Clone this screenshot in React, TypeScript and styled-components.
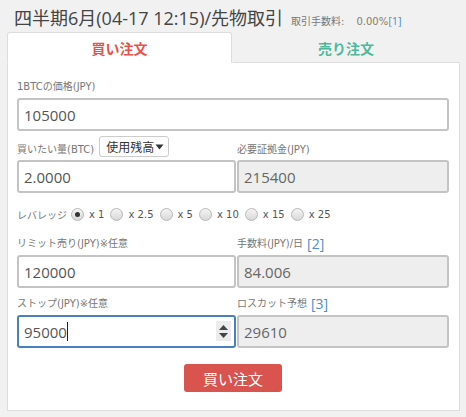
import { ReactElement } from 'react'
import styled, { createGlobalStyle } from 'styled-components'

const GlobalStyle = createGlobalStyle`
  html, body {
    margin: 0;
    padding: 0;
    background: #f1f1f1;
    font-family: 'Open Sans', 'Noto Sans CJK JP', sans-serif;
    color: #555;
  }
`

const smallFont = `'DejaVu Sans', 'Noto Sans CJK JP', sans-serif`

const Page = styled.div`
  width: 453px;
  padding: 0 0 0 7px;
`

const Header = styled.div`
  height: 32px;
  display: flex;
  align-items: baseline;
  padding-left: 7px;
  box-sizing: border-box;
`

const Title = styled.h1`
  margin: 0;
  font-size: 18px;
  line-height: 36px;
  font-weight: 400;
  color: #444;
`

const Fee = styled.span`
  margin-left: 8px;
  font-family: ${smallFont};
  font-size: 10px;
  color: #777;
`

const FeeValue = styled.span`
  margin-left: 12px;
  color: #8a7a66;
`

const Ref = styled.span<{ $size?: number }>`
  color: #4a8fd0;
  font-family: 'Open Sans', sans-serif;
  font-size: ${(p) => p.$size ?? 11}px;
`

const Tabs = styled.div`
  display: flex;
  height: 31px;
`

const Tab = styled.div<{ $active?: boolean; $color: string }>`
  flex: ${(p) => (p.$active ? '0 0 225px' : '1')};
  display: flex;
  align-items: center;
  justify-content: center;
  box-sizing: border-box;
  font-size: 14px;
  font-weight: 700;
  color: ${(p) => p.$color};
  background: ${(p) => (p.$active ? '#fff' : 'transparent')};
  border: 1px solid ${(p) => (p.$active ? '#ddd' : 'transparent')};
  border-bottom: 1px solid ${(p) => (p.$active ? '#fff' : '#ddd')};
  border-radius: ${(p) => (p.$active ? '3px 3px 0 0' : '0')};
`

const Panel = styled.div`
  background: #fff;
  border: 1px solid #ddd;
  border-top: none;
  height: 348px;
  box-sizing: border-box;
  padding: 17px 10px 0 9px;
`

const Label = styled.div`
  font-family: ${smallFont};
  font-size: 10px;
  line-height: 14px;
  color: #777;
  display: flex;
  align-items: center;
  gap: 4px;
`

const Field = styled.div<{ $mb?: number }>`
  display: flex;
  flex-direction: column;
  gap: 4px;
  margin-bottom: ${(p) => p.$mb ?? 0}px;
`

const Row = styled.div<{ $mb?: number }>`
  display: grid;
  grid-template-columns: 219px 212px;
  column-gap: 1px;
  margin-bottom: ${(p) => p.$mb ?? 0}px;
`

const InputWrap = styled.div`
  position: relative;
`

const Input = styled.input<{ $focused?: boolean }>`
  width: 100%;
  height: 33px;
  box-sizing: border-box;
  border: 2px solid ${(p) => (p.$focused ? '#4a7fc0' : '#c4c4c4')};
  border-radius: 3px;
  padding: 0 5px;
  font-family: 'Open Sans', 'Noto Sans CJK JP', sans-serif;
  font-size: 15px;
  color: #555;
  background: #fff;
  outline: none;

  &:disabled {
    background: #eee;
    color: #666;
  }
`

const Spinner = styled.div`
  position: absolute;
  right: 5px;
  top: 6px;
  width: 15px;
  height: 20px;
  background: #ececec;
  display: flex;
  flex-direction: column;
  align-items: center;
  justify-content: center;
  gap: 3px;
`

const Caret = styled.span`
  position: absolute;
  left: 50px;
  top: 7px;
  width: 1px;
  height: 19px;
  background: #222;
`

const SelectButton = styled.button`
  height: 21px;
  padding: 0 4px 0 6px;
  border: 1px solid #ccc;
  border-radius: 3px;
  background: #fff;
  font-family: 'Noto Sans CJK JP', sans-serif;
  font-size: 12px;
  color: #333;
  display: inline-flex;
  align-items: center;
  gap: 1px;
  margin-left: 5px;
`

const LabelRow = styled.div`
  display: flex;
  align-items: flex-end;
  height: 22px;
  margin-bottom: 3px;
`

const Leverage = styled.div`
  display: flex;
  align-items: center;
  font-family: ${smallFont};
  font-size: 10px;
  color: #777;
  height: 22px;
  margin: 10px 0 12px;
`

const Option = styled.label`
  display: inline-flex;
  align-items: center;
  gap: 5px;
  margin-left: 4px;
  margin-right: 2px;
  font-size: 10px;
  color: #555;
`

const Radio = styled.span<{ $checked?: boolean }>`
  width: 11px;
  height: 11px;
  border-radius: 50%;
  border: 1px solid #b8b8b8;
  background: linear-gradient(#f4f4f4, #d8d8d8);
  display: inline-flex;
  align-items: center;
  justify-content: center;
  box-sizing: content-box;

  &::after {
    content: '';
    width: 5px;
    height: 5px;
    border-radius: 50%;
    background: ${(p) => (p.$checked ? '#333' : 'transparent')};
  }
`

const Actions = styled.div`
  display: flex;
  justify-content: center;
  margin-top: 16px;
`

const BuyButton = styled.button`
  width: 98px;
  height: 28px;
  border: none;
  border-radius: 3px;
  background: #d9534f;
  color: #fff;
  font-family: 'Noto Sans CJK JP', sans-serif;
  font-size: 15px;
`

const leverages = ['1', '2.5', '5', '10', '15', '25']

export default function App(): ReactElement {
  return (
    <>
      <GlobalStyle />
      <Page>
        <Header>
          <Title>四半期6月(04-17 12:15)/先物取引</Title>
          <Fee>
            取引手数料:
            <FeeValue>0.00%</FeeValue>
            <Ref>[1]</Ref>
          </Fee>
        </Header>
        <Tabs>
          <Tab $active $color='#e8524a'>
            買い注文
          </Tab>
          <Tab $color='#4db89c'>売り注文</Tab>
        </Tabs>
        <Panel>
          <Field $mb={4}>
            <Label>1BTCの価格(JPY)</Label>
            <Input defaultValue='105000' />
          </Field>

          <Row>
            <LabelRow>
              <Label>買いたい量(BTC)</Label>
              <SelectButton>
                使用残高
                <svg width='9' height='6' viewBox='0 0 9 6'>
                  <path d='M0.5 0.5h8L4.5 5.5z' fill='#333' />
                </svg>
              </SelectButton>
            </LabelRow>
            <LabelRow>
              <Label>必要証拠金(JPY)</Label>
            </LabelRow>
          </Row>
          <Row>
            <Input defaultValue='2.0000' />
            <Input defaultValue='215400' disabled />
          </Row>

          <Leverage>
            レバレッジ
            {leverages.map((v, i) => (
              <Option key={v}>
                <Radio $checked={i === 0} />x {v}
              </Option>
            ))}
          </Leverage>

          <Row $mb={9}>
            <Field>
              <Label>リミット売り(JPY)※任意</Label>
              <Input defaultValue='120000' />
            </Field>
            <Field>
              <Label>
                手数料(JPY)/日 <Ref $size={14}>[2]</Ref>
              </Label>
              <Input defaultValue='84.006' disabled />
            </Field>
          </Row>

          <Row>
            <Field>
              <Label>ストップ(JPY)※任意</Label>
              <InputWrap>
                <Input defaultValue='95000' $focused />
                <Caret />
                <Spinner>
                  <svg width='9' height='5' viewBox='0 0 9 5'>
                    <path d='M4.5 0L9 5H0z' fill='#444' />
                  </svg>
                  <svg width='9' height='5' viewBox='0 0 9 5'>
                    <path d='M0 0h9L4.5 5z' fill='#444' />
                  </svg>
                </Spinner>
              </InputWrap>
            </Field>
            <Field>
              <Label>
                ロスカット予想 <Ref $size={14}>[3]</Ref>
              </Label>
              <Input defaultValue='29610' disabled />
            </Field>
          </Row>

          <Actions>
            <BuyButton>買い注文</BuyButton>
          </Actions>
        </Panel>
      </Page>
    </>
  )
}
